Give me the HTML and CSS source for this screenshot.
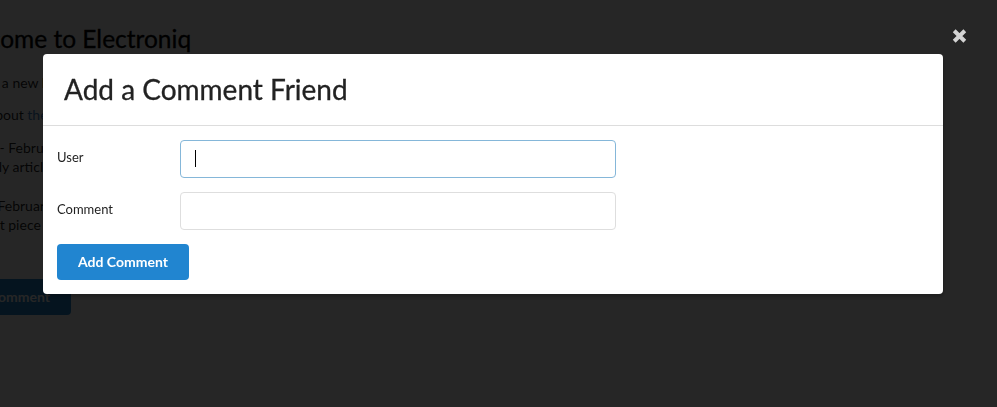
FILE: index.html
```html
<!DOCTYPE html>
<html lang="en">
<head>
<meta charset="utf-8">
<title>Electroniq</title>
<link rel="stylesheet" href="styles.css">
</head>
<body>
  <div class="page">
    <h1 class="page-title">Welcome to Electroniq</h1>
    <p class="intro">Hi! This is a new blog about electronics and gadgets.</p>
    <p class="intro second">All the news about <a class="link" href="#">the</a> latest devices, boards and chips.</p>
    <div class="post">
      <p>Post One - February 4, 2019</p>
      <p>Our weekly article about new chips and sensors.</p>
    </div>
    <div class="post later">
      <p>Post Two - February 11, 2019</p>
      <p>A great first piece on resistors and capacitors.</p>
    </div>
    <button class="page-btn" type="button">Add Comment</button>
  </div>

  <div class="dimmer">
    <div class="modal">
      <button class="close" type="button" aria-label="Close">
        <svg width="15" height="14" viewBox="0 0 15 14">
          <path d="M2.2 1.8 L12.8 12.2 M12.8 1.8 L2.2 12.2" stroke="#d4d4d4" stroke-width="4" stroke-linecap="butt" fill="none"/>
        </svg>
      </button>
      <div class="modal-header">
        <h2 class="modal-title">Add a Comment Friend</h2>
      </div>
      <form class="modal-content">
        <div class="field">
          <label class="field-label" for="user">User</label>
          <div class="input-wrap">
            <input class="input focused" id="user" type="text">
            <span class="caret"></span>
          </div>
        </div>
        <div class="field">
          <label class="field-label" for="comment">Comment</label>
          <div class="input-wrap">
            <input class="input" id="comment" type="text">
          </div>
        </div>
        <div class="actions">
          <button class="btn" type="button">Add Comment</button>
        </div>
      </form>
    </div>
  </div>
</body>
</html>
```

FILE: styles.css
```css
html, body {
  margin: 0;
  padding: 0;
}

body {
  background: #ffffff;
  font-family: Lato, "Noto Sans", "Liberation Sans", sans-serif;
  color: rgba(0, 0, 0, 0.87);
  overflow: hidden;
  width: 997px;
  height: 407px;
}

/* background page */
.page {
  margin-left: -61px;
  padding-top: 24px;
  font-size: 14px;
  line-height: 19px;
}

.page-title {
  margin: 0 0 0 7px;
  font-size: 24.5px;
  font-weight: 400;
  line-height: 1.2;
  color: #000000;
  -webkit-text-stroke: 0.3px #000000;
}

.intro {
  margin: 20px 0 0;
  white-space: nowrap;
}

.intro.second {
  margin-top: 13px;
  margin-left: -30px;
}

.link {
  color: #4183c4;
  text-decoration: none;
}

.post {
  margin-top: 14px;
  white-space: nowrap;
}

.post.later {
  margin-top: 20px;
}

.post.later p:first-child {
  margin-left: -10px;
}

.post.later p:last-child {
  margin-left: -6px;
}

.post p {
  margin: 0;
}

.page-btn {
  margin-top: 45px;
  background: #2185d0;
  color: #ffffff;
  border: none;
  border-radius: 4px;
  font-family: Lato, "Noto Sans", sans-serif;
  font-weight: 700;
  font-size: 14px;
  line-height: 14px;
  padding: 11px 21px;
}

/* dimmer + modal */
.dimmer {
  position: fixed;
  inset: 0;
  background: rgba(0, 0, 0, 0.851);
  padding: 54px 0 0 43px;
}

.modal {
  position: relative;
  width: 900px;
  background: #ffffff;
  border-radius: 4px;
  box-shadow: 1px 3px 3px 0 rgba(0, 0, 0, 0.2);
}

.close {
  position: absolute;
  top: -25px;
  right: -24px;
  width: 15px;
  height: 14px;
  padding: 0;
  border: none;
  background: none;
  display: block;
}

.close svg {
  display: block;
}

.modal-header {
  padding: 19px 21px 18px;
  border-bottom: 1px solid #dddddd;
}

.modal-title {
  margin: 0;
  font-size: 28px;
  font-weight: 400;
  line-height: 1.2;
  color: #222222;
  -webkit-text-stroke: 0.3px #222222;
}

.modal-content {
  padding: 14px;
  display: flex;
  flex-direction: column;
  gap: 14px;
}

.field {
  display: flex;
  align-items: center;
}

.field-label {
  width: 123px;
  padding-bottom: 3px;
  font-size: 13px;
  color: #1f1f1f;
}

.input-wrap {
  position: relative;
}

.input {
  box-sizing: border-box;
  display: block;
  width: 436px;
  height: 38px;
  margin: 0;
  padding: 0 14px;
  border: 1px solid #dedede;
  border-radius: 4px;
  font-family: Lato, "Noto Sans", sans-serif;
  font-size: 14px;
  background: #ffffff;
  outline: none;
}

.input.focused {
  border-color: #85b7d9;
}

.caret {
  position: absolute;
  left: 15px;
  top: 10px;
  width: 1px;
  height: 17px;
  background: #000000;
}

.actions {
  display: flex;
}

.btn {
  background: #2185d0;
  color: #ffffff;
  border: none;
  border-radius: 4px;
  font-family: Lato, "Noto Sans", sans-serif;
  font-weight: 700;
  font-size: 14px;
  line-height: 14px;
  padding: 11px 21px;
  cursor: pointer;
}
```
